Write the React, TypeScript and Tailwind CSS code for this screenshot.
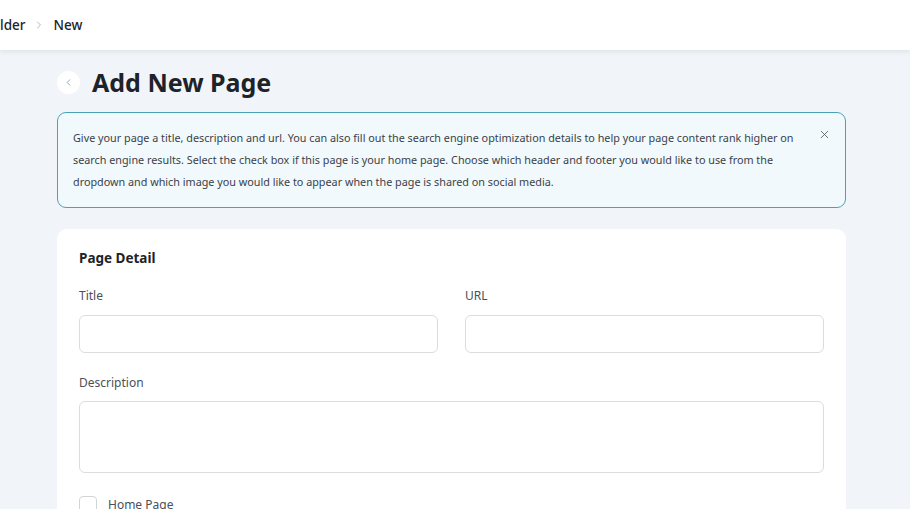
import { ChevronLeft, ChevronRight, X } from 'lucide-react';

export default function App() {
  return (
    <div className="min-h-screen bg-[#f1f5f9] font-['Noto_Sans',sans-serif] text-[#1e2329]">
      {/* Header */}
      <header className="h-[50px] bg-white shadow-[0_2px_5px_rgba(15,23,42,0.08)] flex items-center">
        <nav className="flex items-center gap-[8px] text-[13.5px] font-medium">
          <span>lder</span>
          <ChevronRight className="w-[12px] h-[12px] text-gray-400" strokeWidth={1.5} />
          <span>New</span>
        </nav>
      </header>

      <main className="pl-[57px] pt-[18px] w-[846px]">
        <div className="flex items-center gap-[12px]">
          <button className="w-[23px] h-[23px] rounded-full bg-white flex items-center justify-center text-[#5b8fa8]">
            <ChevronLeft className="w-[11px] h-[11px]" strokeWidth={1.5} />
          </button>
          <h1 className="text-[25px] font-bold leading-[28px]">Add New Page</h1>
        </div>

        {/* Info box */}
        <div className="mt-[16px] rounded-[9px] border border-[#4aa3b5] bg-[#f1f9fc] pl-[15px] pr-[14px] py-[14px] flex items-start">
          <p className="flex-1 text-[10.8px] leading-[22px] text-[#3c4148] pr-[12px]">
            Give your page a title, description and url. You can also fill out the search engine optimization details to help your page content rank higher on search engine results. Select the check box if this page is your home page. Choose which header and footer you would like to use from the dropdown and which image you would like to appear when the page is shared on social media.
          </p>
          <button className="mt-[1px] text-[#4b5563]">
            <X className="w-[13px] h-[13px]" strokeWidth={1.5} />
          </button>
        </div>

        {/* Page detail card */}
        <section className="mt-[21px] bg-white rounded-[10px] px-[22px] pt-[20px] pb-[24px]">
          <h2 className="text-[13.5px] font-bold leading-[18px]">Page Detail</h2>

          <div className="mt-[21px] grid grid-cols-2 gap-x-[27px]">
            <div>
              <label className="block text-[12px] leading-[16px] text-[#4b5058]">Title</label>
              <input className="mt-[11px] w-full h-[38px] rounded-[6px] border border-[#dcdcdc] bg-white" />
            </div>
            <div>
              <label className="block text-[12px] leading-[16px] text-[#4b5058]">URL</label>
              <input className="mt-[11px] w-full h-[38px] rounded-[6px] border border-[#dcdcdc] bg-white" />
            </div>
          </div>

          <div className="mt-[22px]">
            <label className="block text-[12px] leading-[16px] text-[#4b5058]">Description</label>
            <textarea className="mt-[10px] block w-full h-[72px] rounded-[6px] border border-[#dcdcdc] bg-white resize-none" />
          </div>

          <label className="mt-[23px] flex items-center gap-[11px] text-[12px] text-[#4b5058]">
            <span className="w-[18px] h-[18px] rounded-[4px] border border-[#d4d4d4]" />
            Home Page
          </label>
        </section>
      </main>
    </div>
  );
}
